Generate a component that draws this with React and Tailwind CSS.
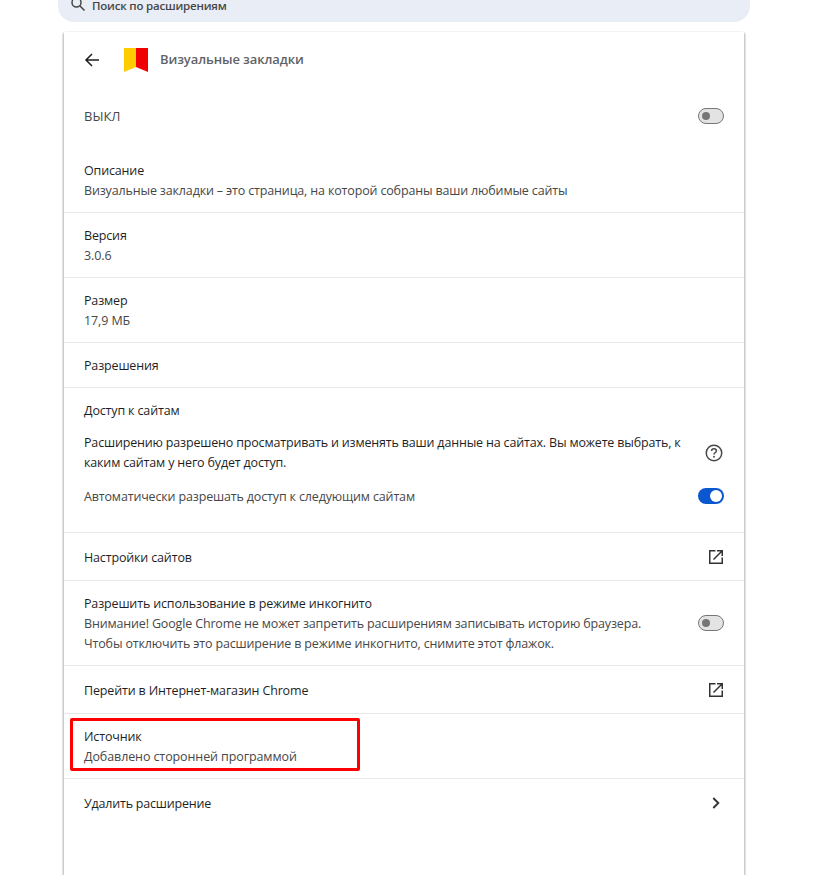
import React from "react";

function ExtLink() {
  return (
    <svg width="16" height="16" viewBox="0 0 16 16" fill="none" className="shrink-0 text-[#333333]">
      <path d="M7.5 1.75H1.75V14.25H14.25V8.5" stroke="currentColor" strokeWidth="1.5" fill="none" />
      <path d="M5.5 10.5L13.5 2.5M9 1.75H14.25V7" stroke="currentColor" strokeWidth="1.5" fill="none" />
    </svg>
  );
}

function Toggle({ on }) {
  if (on) {
    return (
      <div className="w-[26px] h-[16px] rounded-full bg-[#0b57d0] flex items-center justify-end pr-[2px] shrink-0">
        <div className="w-[12px] h-[12px] rounded-full bg-white" />
      </div>
    );
  }
  return (
    <div className="w-[26px] h-[16px] rounded-full bg-[#e3e3e3] border border-[#747775] flex items-center pl-[3px] shrink-0">
      <div className="w-[8px] h-[8px] rounded-full bg-[#747775]" />
    </div>
  );
}

function TextRow({ title, value }) {
  return (
    <div className="h-[65px] border-b border-[#e9e9e9] px-5 pt-[13px]">
      <div className="text-[#1f1f1f] leading-[20px]">{title}</div>
      <div className="text-[#474747] leading-[20px] tracking-[-0.1px]">{value}</div>
    </div>
  );
}

export default function App() {
  return (
    <div className="relative w-[835px] h-[875px] overflow-hidden bg-white text-[12.5px] font-['Open_Sans',sans-serif] tracking-[-0.155px]">
      <div className="ml-[58px] w-[692px] h-[22px] bg-[#e9eef6] rounded-b-[16px] flex items-start pl-[12px] gap-[6px]">
        <svg width="16" height="16" viewBox="0 0 16 16" fill="none" className="text-[#474747] -mt-[4px]">
          <circle cx="6.5" cy="6.5" r="4.5" stroke="currentColor" strokeWidth="1.5" />
          <path d="M10 10L14.5 14.5" stroke="currentColor" strokeWidth="1.6" />
        </svg>
        <span className="text-[#474747] text-[11.5px] leading-[11px] font-semibold tracking-[-0.2px]">Поиск по расширениям</span>
      </div>

      <div className="ml-[64px] mt-[10px] w-[680px] h-[860px] bg-white shadow-[-2px_0_2px_-1px_rgba(60,64,67,0.4),2px_0_2px_-1px_rgba(60,64,67,0.4)]">
        <div className="h-[56px] flex items-center pl-[20px]">
          <svg width="16" height="16" viewBox="0 0 16 16" fill="none" className="text-[#1f1f1f]">
            <path d="M15 8H2M8 2L2 8L8 14" stroke="currentColor" strokeWidth="1.5" />
          </svg>
          <svg width="24" height="24" viewBox="0 0 24 24" className="ml-[24px]">
            <path d="M0 0H12V19L0 24Z" fill="#ffcc00" />
            <path d="M12 0H24V24L12 19Z" fill="#f00000" />
          </svg>
          <span className="ml-[12px] text-[13px] tracking-[-0.1px] font-semibold text-[#5f6368]">Визуальные закладки</span>
        </div>

        <div className="h-[56px] px-5 flex items-center justify-between">
          <span className="text-[#474747] text-[13px] font-medium pt-[1px] tracking-[0px]">ВЫКЛ</span>
          <Toggle />
        </div>

        <div className="h-[69px] border-b border-[#e9e9e9] px-5 pt-[17px]">
          <div className="text-[#1f1f1f] leading-[20px]">Описание</div>
          <div className="text-[#474747] leading-[20px]">Визуальные закладки – это страница, на которой собраны ваши любимые сайты</div>
        </div>
        <TextRow title="Версия" value="3.0.6" />
        <TextRow title="Размер" value="17,9 МБ" />
        <div className="h-[45px] border-b border-[#e9e9e9] px-5 pt-[2px] flex items-center text-[#1f1f1f]">Разрешения</div>

        <div className="h-[145px] border-b border-[#e9e9e9] px-5 pt-[13px]">
          <div className="text-[#1f1f1f] leading-[20px]">Доступ к сайтам</div>
          <div className="mt-[12px] flex items-center justify-between">
            <div className="text-[#1f1f1f] leading-[20px] w-[600px] tracking-[-0.17px]">
              Расширению разрешено просматривать и изменять ваши данные на сайтах. Вы можете выбрать, к каким сайтам у него будет доступ.
            </div>
            <svg width="20" height="20" viewBox="0 0 20 20" fill="none" className="text-[#474747]">
              <circle cx="10" cy="10" r="7.75" stroke="currentColor" strokeWidth="1.5" />
              <path d="M7.6 8C7.6 6.6 8.7 5.8 10 5.8C11.3 5.8 12.4 6.6 12.4 7.9C12.4 9.5 10 9.6 10 11.6" stroke="currentColor" strokeWidth="1.5" />
              <circle cx="10" cy="13.8" r="0.95" fill="currentColor" />
            </svg>
          </div>
          <div className="mt-[12px] flex items-center justify-between">
            <span className="text-[#474747] leading-[20px] pt-[2px]">Автоматически разрешать доступ к следующим сайтам</span>
            <Toggle on />
          </div>
        </div>

        <div className="h-[48px] border-b border-[#e9e9e9] px-5 flex items-center justify-between text-[#1f1f1f]">
          <span className="pt-[3px]">Настройки сайтов</span>
          <ExtLink />
        </div>

        <div className="h-[85px] border-b border-[#e9e9e9] px-5 flex items-center justify-between">
          <div className="leading-[20px] pt-[2px]">
            <div className="text-[#1f1f1f]">Разрешить использование в режиме инкогнито</div>
            <div className="text-[#474747]">Внимание! Google Chrome не может запретить расширениям записывать историю браузера.</div>
            <div className="text-[#474747]">Чтобы отключить это расширение в режиме инкогнито, снимите этот флажок.</div>
          </div>
          <Toggle />
        </div>

        <div className="h-[48px] border-b border-[#e9e9e9] px-5 flex items-center justify-between text-[#1f1f1f]">
          <span className="pt-[3px]">Перейти в Интернет-магазин Chrome</span>
          <ExtLink />
        </div>

        <TextRow title="Источник" value="Добавлено сторонней программой" />

        <div className="h-[48px] px-5 flex items-center justify-between text-[#1f1f1f]">
          <span className="pt-[2px] tracking-[-0.2px]">Удалить расширение</span>
          <svg width="16" height="16" viewBox="0 0 16 16" fill="none" className="text-[#333333]">
            <path d="M5.3 3L10.3 8L5.3 13" stroke="currentColor" strokeWidth="1.9" />
          </svg>
        </div>
      </div>

      <div className="absolute left-[70px] top-[718px] w-[290px] h-[53px] border-[3px] border-[#ff0000] rounded-[2px]" />
    </div>
  );
}
